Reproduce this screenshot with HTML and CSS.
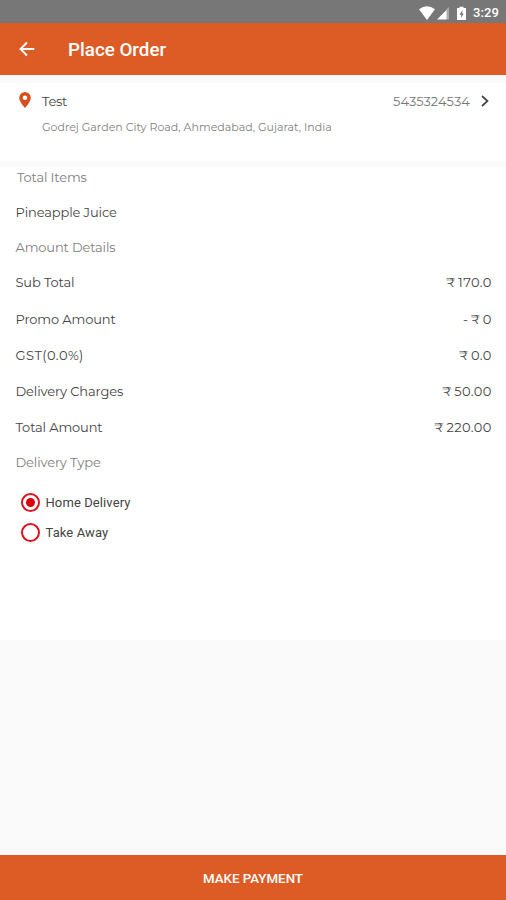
FILE: index.html
```html
<!DOCTYPE html>
<html lang="en">
<head>
<meta charset="utf-8">
<title>Place Order</title>
<link rel="stylesheet" href="styles.css">
</head>
<body>
<div class="screen">
  <div class="status">
    <svg class="status-icons" viewBox="0 0 52 16" width="52" height="16">
      <path d="M1 4.3Q9 -1.6 17 4.3L9 15Z" fill="#fff"/>
      <path d="M31 2V14.500H28V4.500Z" fill="#aaa"/>
      <path d="M19 14.500L28.500 5V14.500Z" fill="#fff"/>
      <path d="M39 3H41.500V1.800H45.500V3H48V15H39Z" fill="#fff"/>
      <path d="M44.500 5L41.500 9.800H43.200V13L45.700 8.500H44.200Z" fill="#777"/>
    </svg>
    <span class="time">3:29</span>
  </div>
  <header class="appbar">
    <svg class="back" viewBox="0 0 16 16" width="16" height="16"><path d="M15.300 8H2M8 1.500L1.500 8L8 14.500" fill="none" stroke="#fff" stroke-width="1.900"/></svg>
    <h1 class="title">Place Order</h1>
  </header>
  <section class="address">
    <svg class="pin" viewBox="0 0 12 16" width="12" height="16"><path d="M6 0A5.800 5.800 0 0 0 .2 5.800C.2 10 6 16 6 16S11.800 10 11.800 5.800A5.800 5.800 0 0 0 6 0ZM6 3.500A2.300 2.300 0 1 1 6 8.100A2.300 2.300 0 0 1 6 3.500Z" fill="#d94e1f" fill-rule="evenodd"/></svg>
    <div class="address-body">
      <div class="contact">
        <span class="name">Test</span>
        <span class="phone">5435324534</span>
        <svg class="chevron" viewBox="0 0 8 12" width="8" height="12"><path d="M1 1L6.500 6L1 11" fill="none" stroke="#444" stroke-width="1.700"/></svg>
      </div>
      <div class="street">Godrej Garden City Road, Ahmedabad, Gujarat, India</div>
    </div>
  </section>
  <main class="details">
    <h2 class="heading items">Total Items</h2>
    <div class="row product"><span>Pineapple Juice</span></div>
    <h2 class="heading amounts">Amount Details</h2>
    <div class="row subtotal"><span>Sub Total</span><span class="value">₹ 170.0</span></div>
    <div class="row promo"><span>Promo Amount</span><span class="value">- ₹ 0</span></div>
    <div class="row gst"><span class="tax">GST(0.0%)</span><span class="value">₹ 0.0</span></div>
    <div class="row charges"><span>Delivery Charges</span><span class="value">₹ 50.00</span></div>
    <div class="row total"><span>Total Amount</span><span class="value">₹ 220.00</span></div>
    <h2 class="heading type">Delivery Type</h2>
    <div class="options">
      <div class="option"><span class="radio checked"></span><span class="home">Home Delivery</span></div>
      <div class="option"><span class="radio"></span><span class="away">Take Away</span></div>
    </div>
  </main>
  <button class="pay">MAKE PAYMENT</button>
</div>
</body>
</html>
```
FILE: styles.css
```css
* { box-sizing: border-box; }
body { margin: 0; background: #fafafa; font-family: Montserrat, Inter, sans-serif; color: #444; }
.screen { height: 900px; display: flex; flex-direction: column; overflow: hidden; }
.status { height: 23px; flex: none; background: #777; display: flex; align-items: center; justify-content: flex-end; padding: 2px 7px 0 0; gap: 3px; color: #fff; }
.time { font: 500 13px/20px Roboto, sans-serif; letter-spacing: .1px; }
.appbar { height: 52px; flex: none; background: #dd5c26; display: flex; align-items: center; padding-left: 19px; }
.title { margin: 2px 0 0 33px; font: 500 18.800px/24px Roboto, sans-serif; color: #fff; }
.address { height: 78px; flex: none; margin-top: 8px; background: #fff; display: flex; padding: 9px 17px 0 19px; }
.pin { flex: none; }
.address-body { flex: 1; margin-left: 11px; }
.contact { display: flex; align-items: center; height: 17px; font-size: 13px; }
.name { flex: 1; letter-spacing: -.3px; }
.phone { color: #777; letter-spacing: .05px; }
.chevron { margin-left: 11px; }
.street { margin-top: 10px; font-size: 11px; line-height: 16px; letter-spacing: .03px; color: #808080; white-space: nowrap; }
.details { height: 473px; flex: none; margin-top: 6px; background: #fff; padding: 0 14px 0 15.500px; }
.heading { margin: 0; height: 35px; font-size: 13px; line-height: 20px; font-weight: 400; letter-spacing: -.15px; color: #808080; }
.items { padding-left: 1.500px; }
.row { display: flex; justify-content: space-between; height: 36px; font-size: 13px; line-height: 20px; letter-spacing: -.13px; }
.product { height: 35px; }
.subtotal { height: 37px; }
.total { height: 35px; }
.tax { letter-spacing: .5px; }
.value { word-spacing: -1.500px; letter-spacing: .4px; margin-right: .2px; }
.options { padding: 0 0 0 5.500px; }
.option { display: flex; align-items: center; height: 30px; gap: 5.500px; font: 13px/20px Roboto, sans-serif; letter-spacing: .1px; }
.home, .away { padding-top: 1px; }
.radio { width: 19px; height: 19px; border: 2px solid #dc1420; border-radius: 50%; display: grid; place-items: center; }
.checked::after { content: ""; width: 9px; height: 9px; border-radius: 50%; background: #d9000d; }
.pay { height: 45px; flex: none; margin-top: auto; border: 0; border-radius: 0; background: #dd5c26; color: #fff; font: 500 13.300px/45px Roboto, sans-serif; }
```
